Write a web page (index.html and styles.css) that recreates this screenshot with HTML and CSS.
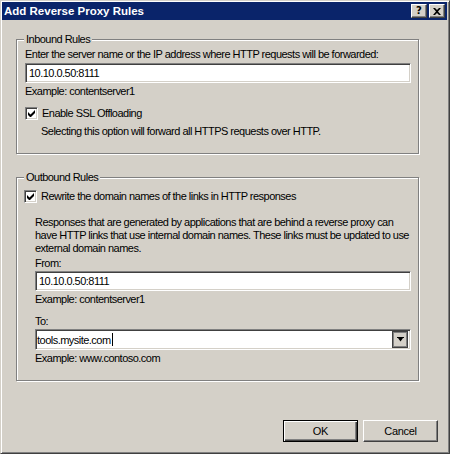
FILE: index.html
```html
<!DOCTYPE html>
<html>
<head>
<meta charset="utf-8">
<link rel="stylesheet" href="styles.css">
</head>
<body>
<div class="window">
  <div class="titlebar">
    <span class="title">Add Reverse Proxy Rules</span>
    <div class="tbtns">
      <span class="tbtn help">?</span>
      <span class="tbtn close"><svg width="8" height="7" viewBox="0 0 8 7"><path d="M0 0h2l2 2 2-2h2L5 3.5 8 7H6L4 5 2 7H0l3-3.5z" fill="#000"/></svg></span>
    </div>
  </div>
  <div class="client">
    <fieldset class="group inbound">
      <legend>Inbound Rules</legend>
      <div class="line intro">Enter the server name or the IP address where HTTP requests will be forwarded:</div>
      <div class="field f-in">10.10.0.50:8111</div>
      <div class="line ex">Example: contentserver1</div>
      <div class="checkrow cr-in">
        <span class="cb"><svg width="7" height="7" viewBox="0 0 7 7"><path d="M0 2v3l2 2h1l4-4V0L2.5 4.5z" fill="#000"/></svg></span>
        <span class="cblabel">Enable SSL Offloading</span>
      </div>
      <div class="line desc">Selecting this option will forward all HTTPS requests over HTTP.</div>
    </fieldset>

    <fieldset class="group outbound">
      <legend>Outbound Rules</legend>
      <div class="checkrow cr-out">
        <span class="cb"><svg width="7" height="7" viewBox="0 0 7 7"><path d="M0 2v3l2 2h1l4-4V0L2.5 4.5z" fill="#000"/></svg></span>
        <span class="cblabel">Rewrite the domain names of the links in HTTP responses</span>
      </div>
      <div class="sub">
        <p class="para">Responses that are generated by applications that are behind a reverse proxy can have HTTP links that use internal domain names. These links must be updated to use external domain names.</p>
        <div class="line lbl">From:</div>
        <div class="field f-from">10.10.0.50:8111</div>
        <div class="line ex">Example: contentserver1</div>
        <div class="line lbl to">To:</div>
        <div class="field combo"><span class="ctext">tools.mysite.com<span class="caret"></span></span><span class="dd"><svg width="7" height="5" viewBox="0 0 7 5"><path d="M0 0h7v1H6L3.5 4.5 1 1H0z" fill="#000"/></svg></span></div>
        <div class="line ex">Example: www.contoso.com</div>
      </div>
    </fieldset>

    <div class="buttons">
      <button class="btn default">OK</button>
      <button class="btn">Cancel</button>
    </div>
  </div>
</div>
</body>
</html>
```

FILE: styles.css
```css
html, body {
  margin: 0;
  padding: 0;
  background: #d4d0c8;
}
body {
  font-family: "Liberation Sans", Arial, sans-serif;
  font-size: 11px;
  letter-spacing: -0.52px;
  color: #000;
}
.window {
  width: 450px;
  height: 454px;
  box-sizing: border-box;
  border: 1px solid;
  border-color: #d4d0c8 #404040 #404040 #d4d0c8;
  box-shadow: inset 1px 1px 0 #fff, inset -1px -1px 0 #808080;
  padding: 1px 2px 2px 1px;
  background: #d4d0c8;
  display: flex;
  flex-direction: column;
}
.titlebar {
  height: 18px;
  background: #0a246a;
  display: flex;
  align-items: center;
  justify-content: space-between;
  padding: 0 2px 0 2px;
}
.title {
  color: #fff;
  font-weight: bold;
  font-size: 11.5px;
  font-family: "Liberation Sans", Arial, sans-serif;
  letter-spacing: 0;
}
.tbtns {
  display: flex;
  gap: 2px;
}
.tbtn {
  width: 14px;
  height: 12px;
  background: #d4d0c8;
  border: 1px solid;
  border-color: #fff #404040 #404040 #fff;
  box-shadow: inset -1px -1px 0 #808080;
  display: flex;
  align-items: center;
  justify-content: center;
  font-weight: bold;
  font-size: 11px;
  line-height: 12px;
  letter-spacing: 0;
}
.help {
  font-family: "DejaVu Sans", sans-serif;
  font-size: 10px;
}
.client {
  flex: 1;
  display: flex;
  flex-direction: column;
  padding: 0 0 0 14px;
}
.group {
  margin: 0;
  padding: 0 0 15px 0;
  width: 403px;
  box-sizing: border-box;
  border: 1px solid #808080;
  box-shadow: inset 1px 1px 0 #fff, 1px 1px 0 #fff;
  min-width: 0;
}
.group legend {
  margin-left: 7px;
  padding: 0 2px;
  line-height: 13px;
  height: 13px;
  background: #d4d0c8;
}
.inbound {
  margin-top: 13px;
}
.outbound {
  margin-top: 17px;
}
.line {
  line-height: 13px;
  height: 13px;
  white-space: nowrap;
}
.inbound .line, .inbound .field, .inbound .checkrow {
  margin-left: 8px;
}
.intro { margin-top: 2px; }
.field {
  height: 20px;
  box-sizing: border-box;
  background: #fff;
  border: 1px solid;
  border-color: #808080 #fff #fff #808080;
  box-shadow: inset 1px 1px 0 #404040, inset -1px -1px 0 #d4d0c8;
  padding: 0 3px;
  line-height: 18px;
  width: 386px;
  display: flex;
  align-items: center;
}
.f-in { margin-top: 2px; }
.ex { margin-top: 2px; }
.checkrow {
  display: flex;
  align-items: center;
  height: 13px;
  line-height: 13px;
}
.cr-in { margin-top: 9px; }
.cb {
  width: 13px;
  height: 13px;
  box-sizing: border-box;
  background: #fff;
  border: 1px solid;
  border-color: #808080 #fff #fff #808080;
  box-shadow: inset 1px 1px 0 #404040, inset -1px -1px 0 #d4d0c8;
  display: flex;
  align-items: center;
  justify-content: center;
  flex: none;
}
.cblabel {
  margin-left: 4px;
}
.desc {
  margin-top: 5px;
  padding-left: 16px;
}
.cr-out {
  margin-top: 6px;
  margin-left: 7px;
}
.sub {
  padding-left: 18px;
}
.para {
  margin: 13px 0 0 0;
  line-height: 13px;
  width: 376px;
}
.lbl { margin-top: 2px; }
.f-from { margin-top: 1px; width: 376px; }
.to { margin-top: 9px; }
.combo {
  margin-top: 1px;
  width: 376px;
  height: 21px;
  justify-content: space-between;
  padding: 0 2px 0 1px;
}
.ctext {
  display: flex;
  align-items: center;
}
.caret {
  display: inline-block;
  width: 1px;
  height: 13px;
  background: #000;
  margin-left: 1px;
}
.dd {
  width: 16px;
  height: 17px;
  box-sizing: border-box;
  background: #d4d0c8;
  border: 1px solid #404040;
  box-shadow: inset 1px 1px 0 #808080, inset -1px -1px 0 #808080;
  display: flex;
  align-items: center;
  justify-content: center;
}
.buttons {
  margin-top: 39px;
  display: flex;
  justify-content: flex-end;
  gap: 5px;
  padding-right: 9px;
}
.btn {
  width: 75px;
  height: 22px;
  box-sizing: border-box;
  background: #d4d0c8;
  font-family: "Liberation Sans", Arial, sans-serif;
  font-size: 11px;
  letter-spacing: -0.3px;
  color: #000;
  border: 1px solid;
  border-color: #fff #404040 #404040 #fff;
  box-shadow: inset -1px -1px 0 #808080;
  padding: 0;
  margin: 0;
}
.btn.default {
  border: 1px solid #000;
  box-shadow: inset 1px 1px 0 #fff, inset -1px -1px 0 #404040, inset -2px -2px 0 #808080;
}
```
